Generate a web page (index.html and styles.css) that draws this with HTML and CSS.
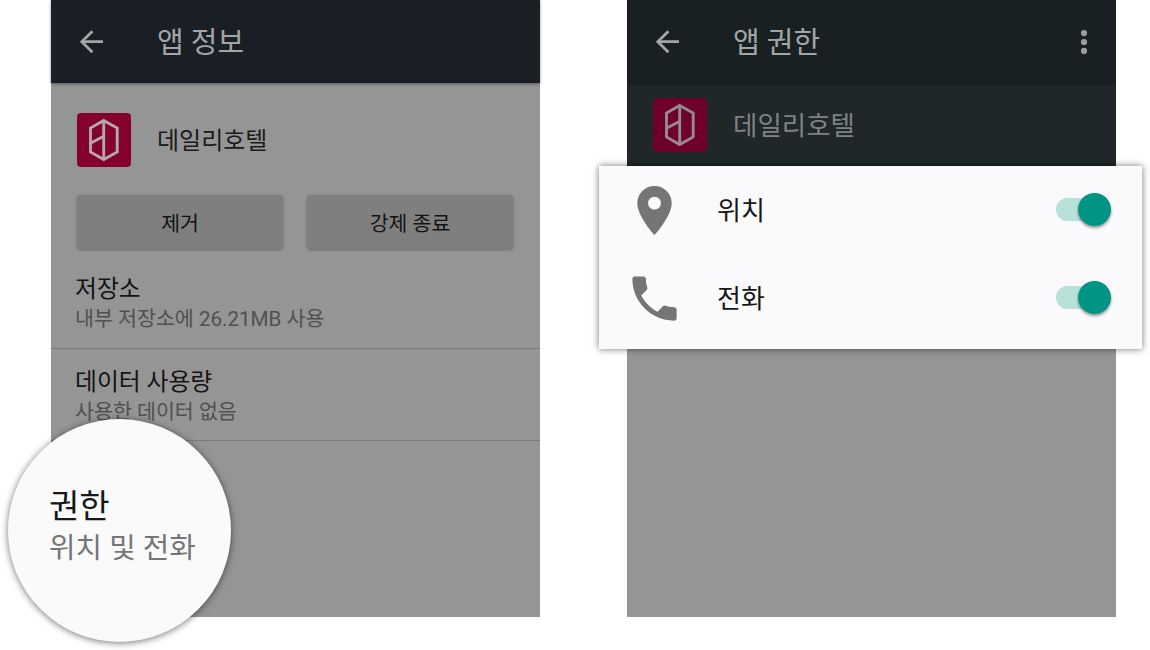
FILE: index.html
```html
<!DOCTYPE html>
<html lang="ko">
<head>
<meta charset="utf-8">
<title>앱 권한</title>
<link rel="stylesheet" href="styles.css">
</head>
<body>
<svg class="defs" width="0" height="0">
  <symbol id="back" viewBox="0 0 24 24"><path d="M24 11.7H3M13.4 1.2L2.8 11.7l10.6 10.5" fill="none" stroke="currentColor" stroke-width="2.8"/></symbol>
  <symbol id="logo" viewBox="0 0 54 54"><path d="M26.7 7.5L40.2 15V39L26.7 46.5L13.5 39V15ZM26.7 7.5V46.5M13.5 30.2L26.7 23.2" fill="none" stroke="currentColor" stroke-width="2.9"/></symbol>
</svg>
<main class="stage">
  <section class="phone info">
    <header class="bar">
      <svg class="back"><use href="#back"/></svg>
      <h1 class="title">앱 정보</h1>
    </header>
    <div class="app">
      <svg class="logo"><use href="#logo"/></svg>
      <span class="app-name">데일리호텔</span>
    </div>
    <div class="buttons">
      <button class="button">제거</button>
      <button class="button">강제 종료</button>
    </div>
    <div class="row storage">
      <div class="row-title">저장소</div>
      <div class="row-sub">내부 저장소에 26.21MB 사용</div>
    </div>
    <div class="row data">
      <div class="row-title">데이터 사용량</div>
      <div class="row-sub">사용한 데이터 없음</div>
    </div>
    <div class="lens">
      <div class="lens-title">권한</div>
      <div class="lens-sub">위치 및 전화</div>
    </div>
  </section>
  <section class="phone perms">
    <header class="bar">
      <svg class="back"><use href="#back"/></svg>
      <h1 class="title">앱 권한</h1>
      <svg class="more" viewBox="0 0 8 24"><circle cx="4" cy="3.1" r="3.1"/><circle cx="4" cy="12" r="3.1"/><circle cx="4" cy="20.9" r="3.1"/></svg>
    </header>
    <div class="app">
      <svg class="logo"><use href="#logo"/></svg>
      <span class="app-name">데일리호텔</span>
    </div>
    <div class="card">
      <div class="perm">
        <svg class="perm-icon" viewBox="0 0 24 24"><path d="M12 2C8.13 2 5 5.13 5 9c0 5.25 7 13 7 13s7-7.75 7-13c0-3.87-3.13-7-7-7zm0 9.6a2.6 2.6 0 1 1 0-5.2 2.6 2.6 0 0 1 0 5.2z"/></svg>
        <span class="perm-name">위치</span>
        <span class="switch"><span class="thumb"></span></span>
      </div>
      <div class="perm">
        <svg class="perm-icon" viewBox="0 0 24 24"><path d="M6.62 10.79c1.44 2.83 3.76 5.14 6.59 6.59l2.2-2.2c.27-.27.67-.36 1.02-.24 1.12.37 2.33.57 3.57.57.55 0 1 .45 1 1V20c0 .55-.45 1-1 1-9.39 0-17-7.61-17-17 0-.55.45-1 1-1h3.5c.55 0 1 .45 1 1 0 1.25.2 2.45.57 3.57.11.35.03.74-.25 1.02l-2.2 2.2z"/></svg>
        <span class="perm-name">전화</span>
        <span class="switch"><span class="thumb"></span></span>
      </div>
    </div>
  </section>
</main>
</body>
</html>
```
FILE: styles.css
```css
* { box-sizing: border-box; }
body {
  margin: 0;
  background: #fff;
  font-family: Roboto, "Noto Sans CJK KR", sans-serif;
  white-space: nowrap;
}
.defs { position: absolute; }
.stage {
  display: flex;
  gap: 87px;
  width: 1150px;
  height: 650px;
  padding-left: 51px;
  overflow: hidden;
}
.phone {
  position: relative;
  flex: none;
  width: 489px;
  height: 617px;
  background: #959595;
}
.bar {
  display: flex;
  align-items: center;
  height: 83px;
  padding: 0 27px 0 28px;
  background: #191f25;
  color: #a3a5a7;
}
.info .bar { box-shadow: 0 1px 3px rgba(0, 0, 0, .4); }
.back { width: 24px; height: 24px; margin-right: 54px; }
.title {
  flex: 1;
  margin: 0;
  padding-top: 2px;
  font-size: 29px;
  line-height: 40px;
  font-weight: 400;
}
.app {
  display: flex;
  align-items: center;
  padding-left: 26px;
}
.info .app { height: 112px; padding-top: 2px; }
.logo {
  width: 54px;
  height: 54px;
  margin-right: 26px;
  border-radius: 4px;
  background: #84002e;
  color: #b5a7ad;
}
.app-name { padding-top: 1px; font-size: 24px; line-height: 34px; color: #1b1b1b; }
.buttons {
  display: flex;
  gap: 24px;
  padding-left: 26px;
}
.button {
  width: 206px;
  height: 54px;
  padding: 0 0 1px;
  border: 0;
  border-radius: 3px;
  background: #7f7f7f;
  box-shadow: 0 1px 3px rgba(0, 0, 0, .3);
  font: inherit;
  font-size: 20.5px;
  color: #131313;
}
.row {
  padding-left: 24px;
  border-bottom: 1px solid #7a7a7a;
}
.storage { height: 100px; padding-top: 24px; }
.data { height: 92px; padding-top: 17px; }
.row-title { font-size: 24px; line-height: 32px; color: #141414; }
.storage .row-title { font-size: 23.8px; }
.data .row-title { font-size: 23.8px; }
.row-sub { font-size: 20.6px; line-height: 29px; color: #505050; }
.lens {
  position: absolute;
  left: -43px;
  top: 419px;
  width: 223px;
  height: 223px;
  padding: 66px 0 0 41px;
  border-radius: 50%;
  background: #fafafa;
  box-shadow: 0 1px 7px rgba(0, 0, 0, .55);
}
.lens-title { font-size: 33px; line-height: 44px; color: #171717; }
.lens-sub { font-size: 28.8px; line-height: 39px; color: #757575; }
.perms .bar { height: 86px; padding-bottom: 3px; background: #182022; }
.more { width: 8px; height: 24px; margin-right: 1px; fill: #9b9e9f; }
.perms .app { height: 80px; padding-bottom: 2px; background: #1f2729; }
.perms .logo { background: #6e002a; color: #968a90; }
.perms .app-name { font-size: 26.5px; color: #7d8283; }
.card {
  position: relative;
  width: 543px;
  height: 183px;
  margin-left: -28px;
  background: #fafafc;
  box-shadow: 0 0 7px rgba(0, 0, 0, .55);
}
.perm {
  display: flex;
  align-items: center;
  height: 88px;
  padding: 0 31px 0 26px;
}
.perm-icon { width: 59px; height: 59px; fill: #757575; }
.perm-name { flex: 1; margin-left: 33px; padding-top: 2px; font-size: 26px; line-height: 36px; color: #171717; }
.switch {
  display: flex;
  align-items: center;
  justify-content: flex-end;
  width: 55px;
  height: 23px;
  margin-bottom: 1px;
  border-radius: 12px;
  background: #b8e1da;
}
.thumb {
  flex: none;
  width: 33px;
  height: 33px;
  border-radius: 50%;
  background: #009485;
  box-shadow: 0 2px 3px rgba(0, 0, 0, .4);
}
```
